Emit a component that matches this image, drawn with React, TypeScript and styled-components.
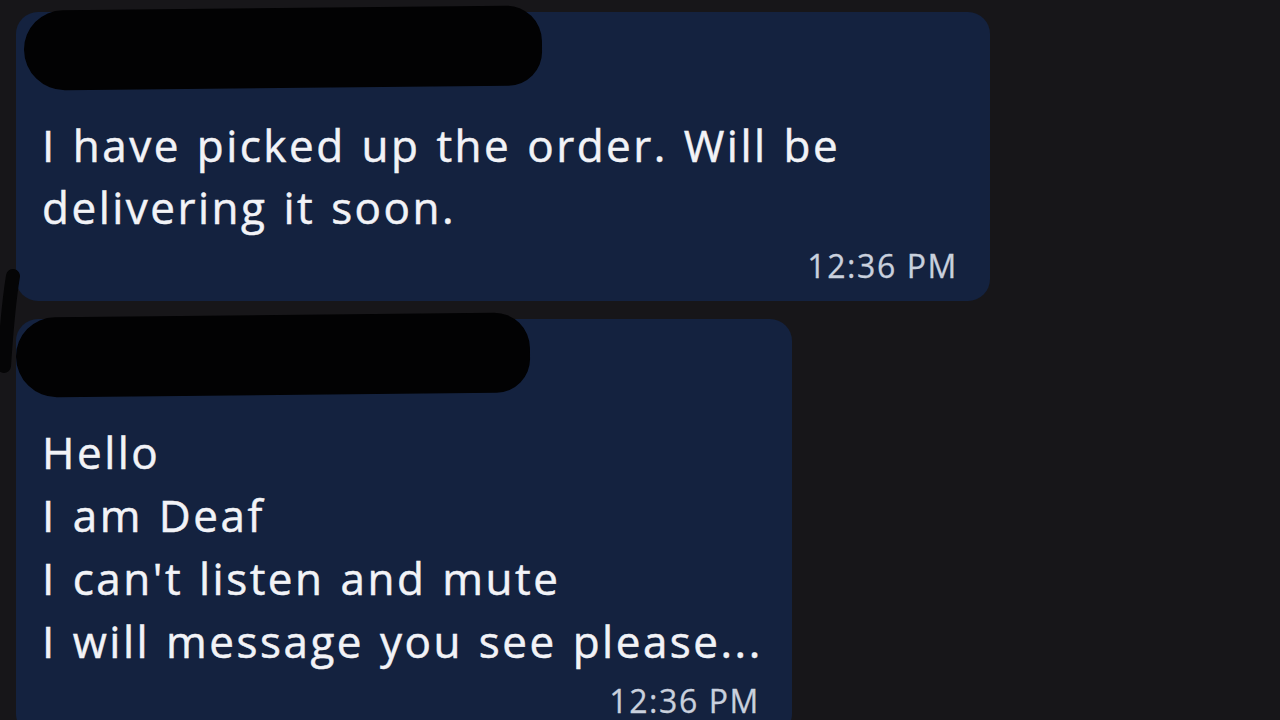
import React from "react";
import styled, { createGlobalStyle } from "styled-components";

const GlobalStyle = createGlobalStyle`
  html, body {
    margin: 0;
    padding: 0;
    background: #171619;
    overflow: hidden;
  }
  body {
    font-family: "Open Sans", Lato, "Liberation Sans", sans-serif;
  }
`;

const Page = styled.div`
  position: relative;
  width: 1280px;
  height: 720px;
  overflow: hidden;
  background: #171619;
  padding: 12px 0 0 16px;
  box-sizing: border-box;
`;

const Thread = styled.div`
  display: flex;
  flex-direction: column;
  align-items: flex-start;
  gap: 18px;
`;

const Bubble = styled.div<{ $width: number }>`
  position: relative;
  width: ${(p) => p.$width}px;
  box-sizing: border-box;
  background: #14223f;
  border-radius: 22px;
  padding: 0 32px 19px 26px;
  display: flex;
  flex-direction: column;
`;

const SenderRow = styled.div`
  height: 102px;
`;

// marker scribble covering the sender name
const Redaction = styled.div<{ $left: number; $top: number; $width: number }>`
  position: absolute;
  left: ${(p) => p.$left}px;
  top: ${(p) => p.$top}px;
  width: ${(p) => p.$width}px;
  height: 80px;
  background: #020203;
  border-radius: 44px 40px 38px 46px;
  transform: rotate(-0.6deg);
`;

const Body = styled.div<{ $lh?: number }>`
  color: #f2f3f7;
  font-size: 44px;
  line-height: ${(p) => p.$lh ?? 62}px;
  letter-spacing: 2.5px;
  word-spacing: 2px;
  -webkit-text-stroke: 0.5px #f2f3f7;
  white-space: pre;
`;

const Time = styled.div`
  align-self: flex-end;
  margin-top: 12px;
  color: #c9d0dd;
  font-size: 32px;
  line-height: 32px;
  letter-spacing: 1.6px;
  -webkit-text-stroke: 0.3px #c9d0dd;
`;

const Stroke = styled.svg`
  position: absolute;
  left: 0;
  top: 266px;
`;

export default function App() {
  return (
    <>
      <GlobalStyle />
      <Page>
        <Thread>
          <Bubble $width={974}>
            <Redaction $left={8} $top={-4} $width={518} />
            <SenderRow />
            <Body>{"I have picked up the order. Will be\ndelivering it soon."}</Body>
            <Time>12:36 PM</Time>
          </Bubble>
          <Bubble $width={776}>
            <Redaction $left={0} $top={-4} $width={514} />
            <SenderRow />
            <Body $lh={63}>
              {"Hello\nI am Deaf\nI can't listen and mute\nI will message you see please..."}
            </Body>
            <Time>12:36 PM</Time>
          </Bubble>
        </Thread>
        <Stroke width="30" height="110" viewBox="0 0 30 110">
          <path d="M13 10 C 8 40, 6 70, 4 100" stroke="#050506" strokeWidth="14" strokeLinecap="round" fill="none" />
        </Stroke>
      </Page>
    </>
  );
}
